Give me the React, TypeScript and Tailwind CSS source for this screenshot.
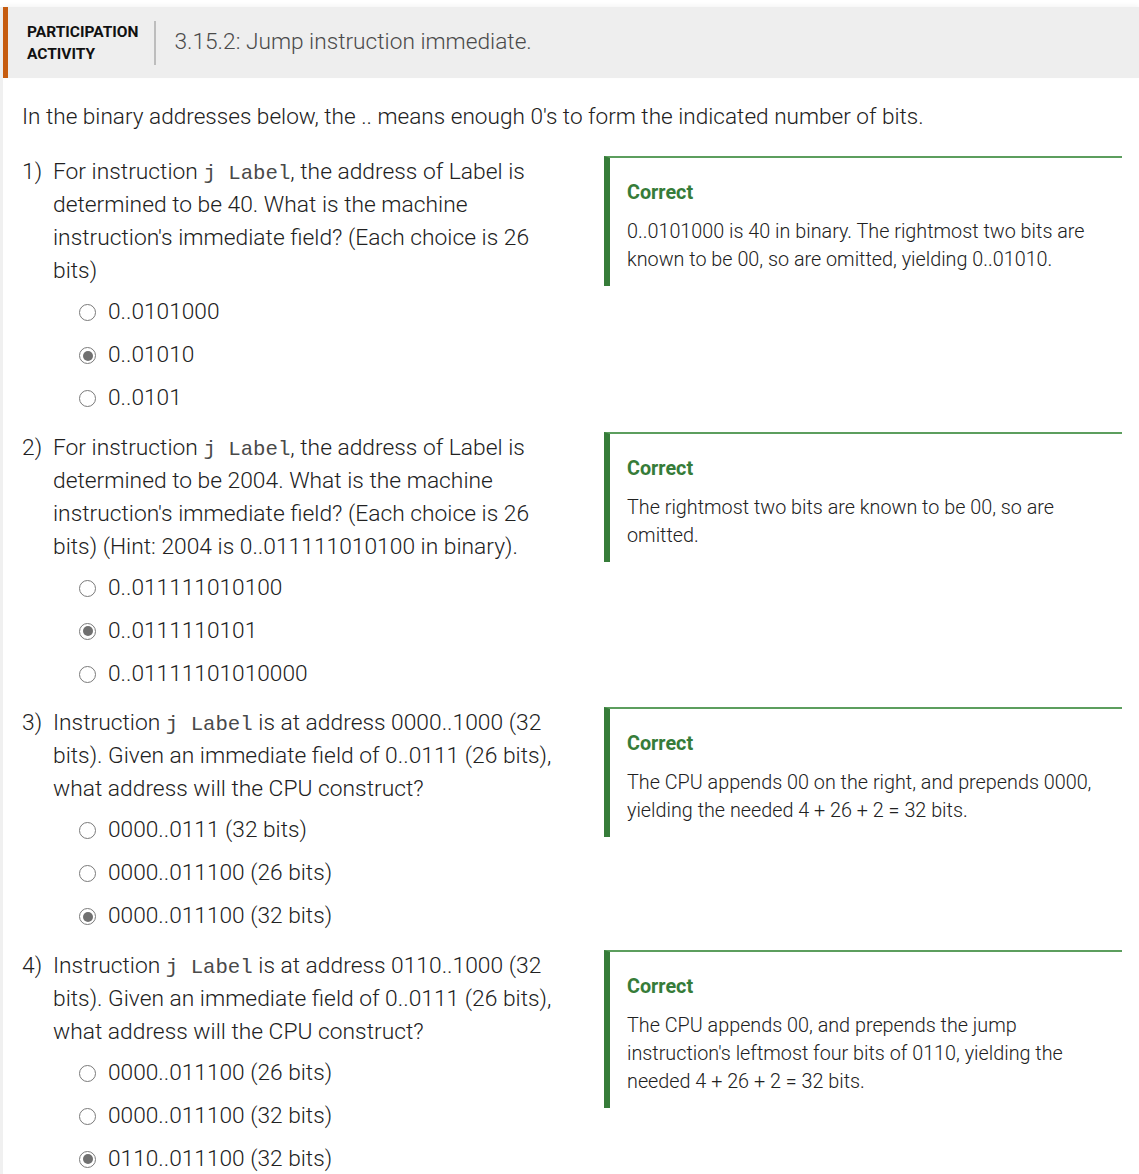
import React from 'react';

type Question = {
  parts: React.ReactNode;
  options: string[];
  selected: number;
  explanation: string;
};

const Code = ({ children }: { children: React.ReactNode }) => (
  <code className="font-['Liberation_Mono',monospace] text-[20.7px] leading-none text-[#4a4a4a]">{children}</code>
);

const questions: Question[] = [
  {
    parts: (
      <>
        For instruction <Code>j Label</Code>, the address of Label is determined to be 40. What is the machine
        instruction's immediate field? (Each choice is 26 bits)
      </>
    ),
    options: ['0..0101000', '0..01010', '0..0101'],
    selected: 1,
    explanation: '0..0101000 is 40 in binary. The rightmost two bits are known to be 00, so are omitted, yielding 0..01010.',
  },
  {
    parts: (
      <>
        For instruction <Code>j Label</Code>, the address of Label is determined to be 2004. What is the machine
        instruction's immediate field? (Each choice is 26 bits) (Hint: 2004 is 0..011111010100 in binary).
      </>
    ),
    options: ['0..011111010100', '0..0111110101', '0..01111101010000'],
    selected: 1,
    explanation: 'The rightmost two bits are known to be 00, so are omitted.',
  },
  {
    parts: (
      <>
        Instruction <Code>j Label</Code> is at address 0000..1000 (32 bits). Given an immediate field of 0..0111 (26
        bits), what address will the CPU construct?
      </>
    ),
    options: ['0000..0111 (32 bits)', '0000..011100 (26 bits)', '0000..011100 (32 bits)'],
    selected: 2,
    explanation: 'The CPU appends 00 on the right, and prepends 0000, yielding the needed 4 + 26 + 2 = 32 bits.',
  },
  {
    parts: (
      <>
        Instruction <Code>j Label</Code> is at address 0110..1000 (32 bits). Given an immediate field of 0..0111 (26
        bits), what address will the CPU construct?
      </>
    ),
    options: ['0000..011100 (26 bits)', '0000..011100 (32 bits)', '0110..011100 (32 bits)'],
    selected: 2,
    explanation:
      "The CPU appends 00, and prepends the jump instruction's leftmost four bits of 0110, yielding the needed 4 + 26 + 2 = 32 bits.",
  },
];

function Radio({ checked }: { checked: boolean }) {
  return (
    <span className="flex h-[17px] w-[17px] shrink-0 items-center justify-center rounded-full border-[1.5px] border-[#7a7a7a] bg-white">
      {checked && <span className="h-[10px] w-[10px] rounded-full bg-[#707070]" />}
    </span>
  );
}

export default function App() {
  return (
    <div className="min-h-[1174px] bg-white pt-[7px] font-['Roboto',sans-serif] text-[#212121]">
      <div className="min-h-[1167px] border-l-[3px] border-[#f0f0f0]">
        <div className="flex h-[71px] items-center border-l-[5px] border-[#c65c10] bg-[#eeeeee] shadow-[0_-2px_4px_rgba(0,0,0,0.04)]">
          <div className="pl-[19px] pr-[16px] text-[15.5px] font-bold leading-[22px] text-[#111]">
            PARTICIPATION
            <br />
            ACTIVITY
          </div>
          <div className="h-[44px] w-[2px] bg-[#bdbdbd]" />
          <div className="pl-[18px] text-[22.7px] font-light text-[#4a4a4a]">3.15.2: Jump instruction immediate.</div>
        </div>

        <div className="pl-[19px] pr-[17px]">
          <p className="mt-[22px] text-[22.6px] font-light leading-[33px]">
            In the binary addresses below, the .. means enough 0's to form the indicated number of bits.
          </p>

          <div className="mt-[22px] flex flex-col">
            {questions.map((q, i) => (
              <div key={i} className="flex pb-[10.5px]">
                <div className="w-[582px] shrink-0">
                  <div className="flex text-[22.8px] font-light leading-[33px]">
                    <span className="w-[31px] shrink-0">{i + 1})</span>
                    <div className="w-[508px]">{q.parts}</div>
                  </div>
                  <div className="mt-[4px] flex flex-col pl-[57px]">
                    {q.options.map((opt, j) => (
                      <label key={j} className="flex h-[43px] items-center gap-[12px] text-[22.7px] font-light">
                        <Radio checked={j === q.selected} />
                        <span>{opt}</span>
                      </label>
                    ))}
                  </div>
                </div>
                <div className="flex-1 pt-[1px]">
                  <div className="border-t-2 border-l-[6px] border-t-[#5c9e5e] border-l-[#367c39] pt-[21px] pb-[12px] pl-[17px] pr-[10px]">
                    <div className="text-[19.8px] font-bold leading-[28px] text-[#367c39]">Correct</div>
                    <div className="mt-[11px] text-[19.8px] font-light leading-[28px]">{q.explanation}</div>
                  </div>
                </div>
              </div>
            ))}
          </div>
        </div>
      </div>
    </div>
  );
}
